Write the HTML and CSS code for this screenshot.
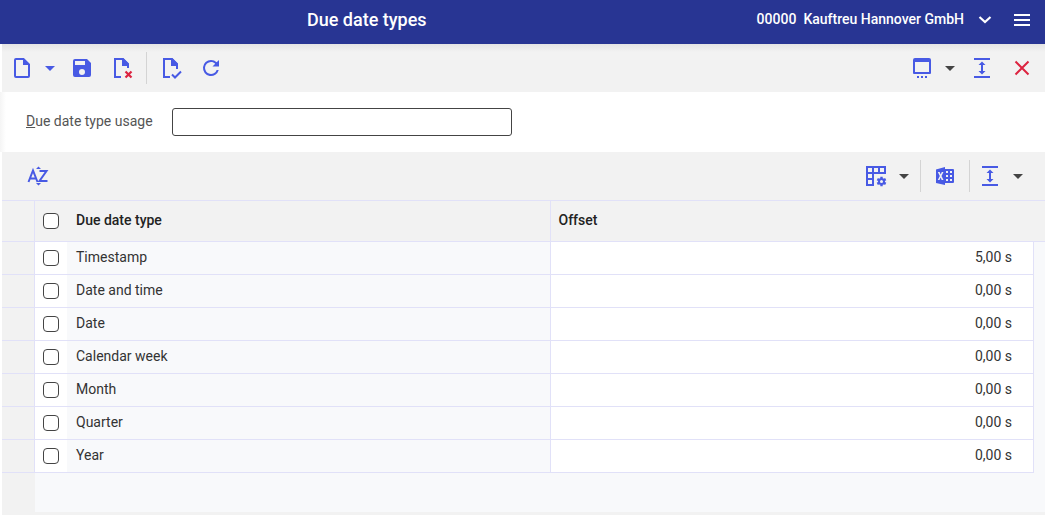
FILE: index.html
```html
<!DOCTYPE html>
<html lang="en">
<head>
<meta charset="utf-8">
<title>Due date types</title>
<link rel="stylesheet" href="styles.css">
</head>
<body>
<div class="app">
  <header class="titlebar">
    <h1 class="title">Due date types</h1>
    <div class="account">
      <button class="company" type="button"><span class="company-name"><span>00000</span><span>Kauftreu Hannover GmbH</span></span>
        <svg class="chevron" width="14" height="8" viewBox="0 0 14 8"><path d="M1.500 1l5.500 5 5.500-5" fill="none" stroke="currentColor" stroke-width="2.200"/></svg>
      </button>
      <button class="menu" type="button" aria-label="Menu"><svg width="16" height="12" viewBox="0 0 16 12"><path d="M0 1h16M0 6h16M0 11h16" stroke="currentColor" stroke-width="2"/></svg></button>
    </div>
  </header>

  <div class="toolbar main-bar" role="toolbar" aria-label="Page">
    <button class="tool" type="button" aria-label="New"><svg width="24" height="24" viewBox="0 0 24 24"><path d="M12.500 3H5a1 1 0 0 0-1 1v16a1 1 0 0 0 1 1h12a1 1 0 0 0 1-1V8.500z" fill="none" stroke="currentColor" stroke-width="2"/><path d="M12 2.500V9h6.500z" fill="currentColor"/></svg></button>
    <button class="arrow" type="button" aria-label="New options"><svg width="10" height="5" viewBox="0 0 10 5"><path d="M0 0h10L5 5z" fill="currentColor"/></svg></button>
    <button class="tool save" type="button" aria-label="Save"><svg width="24" height="24" viewBox="0 0 24 24"><path fill="currentColor" fill-rule="evenodd" d="M17 3H5a2 2 0 0 0-2 2v14a2 2 0 0 0 2 2h14a2 2 0 0 0 2-2V7zM12 19a3 3 0 1 1 0-6 3 3 0 0 1 0 6zM15 9H5V5h10z"/></svg></button>
    <button class="tool delete" type="button" aria-label="Delete"><svg width="24" height="24" viewBox="0 0 24 24"><path d="M11 21H5V3h8l5 5v4" fill="none" stroke="currentColor" stroke-width="2"/><path d="M12 3v7h7V8l-6-6z" fill="currentColor"/><path d="M15.500 15.500l6 6m0-6l-6 6" stroke="#dc2440" stroke-width="2.200"/></svg></button>
    <span class="divider"></span>
    <button class="tool check" type="button" aria-label="Validate"><svg width="24" height="24" viewBox="0 0 24 24"><path d="M11 21H5V3h8l5 5v5" fill="none" stroke="currentColor" stroke-width="2"/><path d="M12 3v7h7V8l-6-6z" fill="currentColor"/><path d="M13 18.500l3 3 6-6" fill="none" stroke="currentColor" stroke-width="2"/></svg></button>
    <button class="tool reload" type="button" aria-label="Reload"><svg width="24" height="24" viewBox="0 0 24 24"><path d="M17.650 6.350A7.960 7.960 0 0 0 12 4a8 8 0 1 0 7.730 10h-2.080A6 6 0 1 1 12 6c1.660 0 3.140.690 4.220 1.780L13.500 10.500H20V4z" fill="currentColor"/></svg></button>
    <span class="spacer"></span>
    <button class="tool" type="button" aria-label="Window"><svg width="24" height="24" viewBox="0 0 24 24"><path fill="currentColor" fill-rule="evenodd" d="M5 2h14a2 2 0 0 1 2 2v13a1 1 0 0 1-1 1H4a1 1 0 0 1-1-1V4a2 2 0 0 1 2-2zM5 6v10h14V6z"/><path d="M7 20h2v2H7zm4 0h2v2h-2zm4 0h2v2h-2z" fill="currentColor"/></svg></button>
    <button class="arrow dark" type="button" aria-label="Window options"><svg width="10" height="5" viewBox="0 0 10 5"><path d="M0 0h10L5 5z" fill="currentColor"/></svg></button>
    <button class="tool height" type="button" aria-label="Row height"><svg width="24" height="24" viewBox="0 0 24 24"><path d="M4 3h16M4 21h16M12 7v10" stroke="currentColor" stroke-width="2"/><path d="M12 5.500l3.500 3.500h-7zM12 18.500L8.500 15h7z" fill="currentColor"/></svg></button>
    <button class="tool close" type="button" aria-label="Close"><svg width="24" height="24" viewBox="0 0 24 24"><path d="M5.500 5.500l13 13m0-13l-13 13" stroke="currentColor" stroke-width="2"/></svg></button>
  </div>

  <form class="filter">
    <label for="usage"><u>D</u>ue date type usage</label>
    <input class="field" id="usage" type="text">
  </form>

  <div class="toolbar table-bar" role="toolbar" aria-label="Table">
    <button class="tool sort" type="button" aria-label="Sort"><svg width="24" height="24" viewBox="0 0 24 24"><path d="M2.500 18L7 6.500 11.500 18M4 14.500h6M13.500 7h7l-7 10h8" fill="none" stroke="currentColor" stroke-width="2"/><path d="M12.500 2.500l2.500 2.500h-5zM12.500 21.500L10 19h5z" fill="currentColor"/></svg></button>
    <span class="spacer"></span>
    <button class="tool" type="button" aria-label="Table settings"><svg width="24" height="24" viewBox="0 0 24 24"><path d="M3 3h18v6H3zM9 3v18H3V9M15 3v6M3 15h6" fill="none" stroke="currentColor" stroke-width="2"/><circle cx="17.500" cy="17.500" r="2.500" fill="none" stroke="currentColor" stroke-width="2"/><path d="M17.500 12.700v2M17.500 20.300v2M13.300 15.100l1.800 1M19.900 18.900l1.800 1M13.300 19.900l1.800-1M19.900 16.100l1.800-1" stroke="currentColor" stroke-width="2.400"/></svg></button>
    <button class="arrow dark" type="button" aria-label="Table settings options"><svg width="10" height="5" viewBox="0 0 10 5"><path d="M0 0h10L5 5z" fill="currentColor"/></svg></button>
    <span class="divider"></span>
    <button class="tool excel" type="button" aria-label="Export to Excel"><svg width="24" height="24" viewBox="0 0 24 24"><path fill="currentColor" fill-rule="evenodd" d="M3 5.500L12 3v2h8a1 1 0 0 1 1 1v12a1 1 0 0 1-1 1h-8v2l-9-2zM4.800 8l2 4-2 4h1.700L7.600 13.500 8.700 16h1.800l-2-4 2-4H8.800L7.700 10.500 6.600 8zM13 7v2h2V7zm4 0v2h2V7zm-4 4v2h2v-2zm4 0v2h2v-2zm-4 4v2h2v-2zm4 0v2h2v-2z"/></svg></button>
    <span class="divider"></span>
    <button class="tool rows" type="button" aria-label="Row height"><svg width="24" height="24" viewBox="0 0 24 24"><path d="M4 3h16M4 21h16M12 7v10" stroke="currentColor" stroke-width="2"/><path d="M12 5.500l3.500 3.500h-7zM12 18.500L8.500 15h7z" fill="currentColor"/></svg></button>
    <button class="arrow dark" type="button" aria-label="Row height options"><svg width="10" height="5" viewBox="0 0 10 5"><path d="M0 0h10L5 5z" fill="currentColor"/></svg></button>
  </div>

  <table class="grid">
    <colgroup><col class="col-gutter"><col class="col-check"><col><col><col class="col-end"></colgroup>
    <thead>
      <tr><th class="gutter"></th><th class="pick"><input type="checkbox" aria-label="Select all"></th><th class="name">Due date type</th><th class="offset">Offset</th><th></th></tr>
    </thead>
    <tbody>
      <tr><td class="gutter"></td><td class="pick"><input type="checkbox" aria-label="Timestamp"></td><td class="name">Timestamp</td><td class="offset">5,00 s</td><td class="end"></td></tr>
      <tr><td class="gutter"></td><td class="pick"><input type="checkbox" aria-label="Date and time"></td><td class="name">Date and time</td><td class="offset">0,00 s</td><td class="end"></td></tr>
      <tr><td class="gutter"></td><td class="pick"><input type="checkbox" aria-label="Date"></td><td class="name">Date</td><td class="offset">0,00 s</td><td class="end"></td></tr>
      <tr><td class="gutter"></td><td class="pick"><input type="checkbox" aria-label="Calendar week"></td><td class="name">Calendar week</td><td class="offset">0,00 s</td><td class="end"></td></tr>
      <tr><td class="gutter"></td><td class="pick"><input type="checkbox" aria-label="Month"></td><td class="name">Month</td><td class="offset">0,00 s</td><td class="end"></td></tr>
      <tr><td class="gutter"></td><td class="pick"><input type="checkbox" aria-label="Quarter"></td><td class="name">Quarter</td><td class="offset">0,00 s</td><td class="end"></td></tr>
      <tr><td class="gutter"></td><td class="pick"><input type="checkbox" aria-label="Year"></td><td class="name">Year</td><td class="offset">0,00 s</td><td class="end"></td></tr>
    </tbody>
  </table>
  <div class="rest"></div>
</div>
</body>
</html>
```

FILE: styles.css
```css
* { box-sizing: border-box; }

body {
  margin: 0;
  background: #fff;
  color: #333;
  font: 14px/20px Roboto, "Liberation Sans", sans-serif;
}

.app {
  display: flex;
  flex-direction: column;
  min-height: 100vh;
  padding: 0 2px 2px 0;
}

button {
  display: flex;
  align-items: center;
  justify-content: center;
  padding: 0;
  border: 0;
  background: none;
  color: inherit;
  font: inherit;
}

.titlebar {
  display: flex;
  align-items: center;
  height: 44px;
  padding: 0 15px 4px 0;
  background: #283593;
  color: #fff;
}

.title {
  flex: 1;
  margin: 0;
  font-size: 18px;
  font-weight: 500;
  line-height: 24px;
  text-align: center;
}

.account { display: flex; align-items: center; gap: 22px; padding-left: 23px; }
.company { gap: 14px; font-weight: 500; }
.company-name { display: flex; gap: 7px; padding-bottom: 2px; }

.toolbar {
  display: flex;
  align-items: center;
  height: 48px;
  margin-left: 2px;
  background: #f2f2f2;
  color: #485ae4;
}

.main-bar {
  padding: 0 11px 0 9px;
  background: linear-gradient(#e4e4e4, #f2f2f2 8px);
}

.table-bar { padding: 0 22px 0 24px; }
.tool { width: 24px; height: 24px; }
.arrow { width: 10px; height: 24px; margin-left: 10px; }
.dark { margin-left: 11px; color: #444; }
.spacer { flex: 1; }
.divider { width: 1px; height: 32px; background: #d4d4d4; }
.save { margin-left: 15px; }
.delete { margin: 0 12px 0 16px; }
.check { margin-left: 12px; }
.reload { margin-left: 16px; }
.height { margin-left: 15px; }
.close { margin-left: 16px; color: #dc2440; }
.table-bar .divider { margin: 0 12px 0 11px; }
.table-bar .excel { margin-right: 1px; }
.table-bar .rows { margin-left: -4px; }

.filter {
  display: flex;
  align-items: center;
  gap: 19px;
  height: 60px;
  padding: 0 26px;
  background: linear-gradient(to right, #f5f5f5, #fff 6px);
  color: #555;
}

.filter label { padding-bottom: 2px; }

.field {
  flex: 0 1 340px;
  height: 28px;
  padding: 0 8px;
  border: 1px solid #444;
  border-radius: 3px;
  background: #fff;
  font: inherit;
}

.grid {
  width: calc(100% - 2px);
  margin-left: 2px;
  border-spacing: 0;
  border-top: 1px solid #e1e1f8;
  table-layout: fixed;
}

.col-gutter { width: 33px; }
.col-check { width: 32px; }
.col-end { width: 11px; }

.grid th, .grid td {
  height: 33px;
  padding: 0 0 2px;
  border-bottom: 1px solid #e1e1f8;
  text-align: left;
}

.grid th { height: 41px; background: #f2f2f2; font-weight: 500; color: #222; }
.grid .gutter { border-right: 1px solid #e1e1f8; background: #f2f2f2; }
.grid .name { padding-left: 9px; border-right: 1px solid #e1e1f8; }
.grid .offset { padding-left: 8px; }
.grid td.name { background: #f8f9fb; }
.grid td.offset { padding-right: 21px; border-right: 1px solid #e1e1f8; text-align: right; }
.grid td.end { border-bottom: 0; background: #f8f9fb; }
.grid .pick { padding: 0 0 0 8px; }

.pick input {
  display: block;
  appearance: none;
  width: 16px;
  height: 16px;
  margin: 0;
  border: 1px solid #444;
  border-radius: 4px;
  background: #fff;
}

.rest {
  flex: 1;
  margin-left: 2px;
  border-bottom: 3px solid #f2f2f2;
  border-left: 33px solid #f2f2f2;
  background: #f8f9fb;
}
```
